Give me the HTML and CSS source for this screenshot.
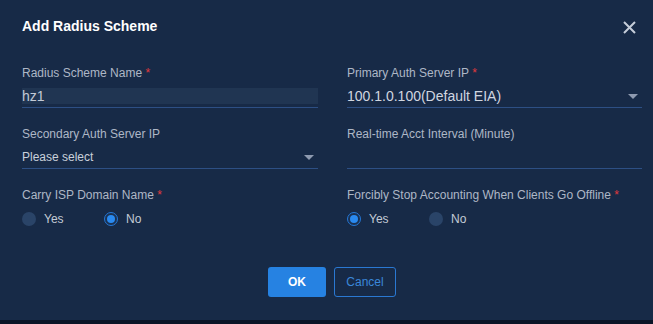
FILE: index.html
```html
<!DOCTYPE html>
<html lang="en">
<head>
    <meta charset="UTF-8">
    <meta name="viewport" content="width=device-width, initial-scale=1.0">
    <title>Add Radius Scheme</title>
    <link rel="stylesheet" href="styles.css">
</head>
<body>
    <div class="dialog">
        <header class="dialog-header">
            <h1>Add Radius Scheme</h1>
            <button class="close-btn" aria-label="Close">
                <svg width="13" height="13" viewBox="0 0 13 13">
                    <path d="M1 1L12 12M12 1L1 12" stroke="#c5cdd9" stroke-width="2" fill="none"/>
                </svg>
            </button>
        </header>

        <div class="form-grid">
            <div class="field">
                <label>Radius Scheme Name <span class="req">*</span></label>
                <div class="control">
                    <div class="value filled">hz1</div>
                </div>
            </div>
            <div class="field">
                <label>Primary Auth Server IP <span class="req">*</span></label>
                <div class="control select">
                    <div class="value big">100.1.0.100(Default EIA)</div>
                    <span class="caret"></span>
                </div>
            </div>

            <div class="field">
                <label>Secondary Auth Server IP</label>
                <div class="control select">
                    <div class="value">Please select</div>
                    <span class="caret"></span>
                </div>
            </div>
            <div class="field">
                <label>Real-time Acct Interval (Minute)</label>
                <div class="control">
                    <div class="value"></div>
                </div>
            </div>

            <div class="field">
                <label>Carry ISP Domain Name <span class="req">*</span></label>
                <div class="radio-group">
                    <span class="radio-option"><span class="radio"></span>Yes</span>
                    <span class="radio-option"><span class="radio checked"></span>No</span>
                </div>
            </div>
            <div class="field">
                <label>Forcibly Stop Accounting When Clients Go Offline <span class="req">*</span></label>
                <div class="radio-group">
                    <span class="radio-option"><span class="radio checked"></span>Yes</span>
                    <span class="radio-option"><span class="radio"></span>No</span>
                </div>
            </div>
        </div>

        <div class="dialog-footer">
            <button class="btn btn-primary">OK</button>
            <button class="btn btn-outline">Cancel</button>
        </div>
    </div>
</body>
</html>
```

FILE: styles.css
```css
body {
    font-family: "Liberation Sans", Arial, sans-serif;
    margin: 0;
    padding: 0;
    background-color: #0b1527;
    height: 324px;
    overflow: hidden;
}

.dialog {
    height: 320px;
    background-color: #172a47;
    padding: 0 11px 0 22px;
    box-sizing: border-box;
}

.dialog-header {
    display: flex;
    justify-content: space-between;
    align-items: center;
    padding-top: 16px;
    padding-right: 6px;
    height: 20px;
}

.dialog-header h1 {
    margin: 0;
    font-size: 14px;
    line-height: 20px;
    font-weight: bold;
    color: #ffffff;
}

.close-btn {
    background: none;
    border: none;
    padding: 0;
    width: 13px;
    height: 13px;
    display: flex;
    cursor: pointer;
    margin-top: 2px;
}

.form-grid {
    display: grid;
    grid-template-columns: 296px 295px;
    column-gap: 29px;
    row-gap: 19px;
    margin-top: 30px;
}

.field label {
    display: block;
    font-size: 12px;
    line-height: 14px;
    color: #aeb7c6;
}

.req {
    color: #e0393c;
}

.control {
    display: flex;
    align-items: center;
    margin-top: 8px;
    padding-bottom: 3px;
    border-bottom: 1px solid #2d4f84;
}

.value {
    flex: 1;
    height: 16px;
    font-size: 12px;
    line-height: 16px;
    color: #c9d0db;
}

.value.filled {
    background-color: #203552;
    font-size: 14px;
    color: #c3cad6;
}

.value.big {
    font-size: 14px;
    color: #d0d6e0;
}

.caret {
    width: 0;
    height: 0;
    border-left: 5px solid transparent;
    border-right: 5px solid transparent;
    border-top: 5px solid #8e9ab0;
    margin-right: 4px;
}

.radio-group {
    display: flex;
    margin-top: 10px;
}

.radio-option {
    display: flex;
    align-items: center;
    width: 82px;
    height: 14px;
    font-size: 12px;
    color: #c3cad6;
}

.radio {
    width: 14px;
    height: 14px;
    border-radius: 50%;
    background-color: #2a4468;
    box-sizing: border-box;
    margin-right: 8px;
    flex-shrink: 0;
}

.radio.checked {
    background-color: #1a3152;
    border: 1px solid #2477d6;
    display: flex;
    align-items: center;
    justify-content: center;
}

.radio.checked::after {
    content: "";
    width: 8px;
    height: 8px;
    border-radius: 50%;
    background-color: #2a8af0;
}

.dialog-footer {
    display: flex;
    justify-content: center;
    gap: 8px;
    margin-top: 41px;
}

.btn {
    height: 30px;
    font-family: "Liberation Sans", Arial, sans-serif;
    font-size: 12px;
    border-radius: 3px;
    cursor: pointer;
}

.btn-primary {
    width: 58px;
    background-color: #2682e2;
    color: #ffffff;
    font-weight: bold;
    border: none;
}

.btn-outline {
    width: 62px;
    background-color: transparent;
    color: #3a87d9;
    border: 1px solid #2a78d2;
}
```
